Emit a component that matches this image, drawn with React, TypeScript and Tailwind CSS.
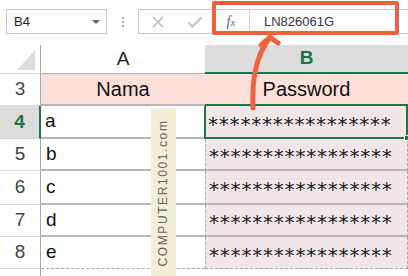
import React from "react";

const GRID = "#b7b5ba";

type Row = { n: number; a: string; h: string; last?: boolean };

const rows: Row[] = [
  { n: 5, a: "b", h: "h-[32px]" },
  { n: 6, a: "c", h: "h-[34px]" },
  { n: 7, a: "d", h: "h-[32px]" },
  { n: 8, a: "e", h: "h-[32px]", last: true },
];

const stars = "*****************";

function Toolbar() {
  return (
    <div className="relative h-[45px] flex items-start pt-[9px]">
      {/* name box */}
      <div className="ml-[6px] w-[101px] h-[25px] border border-[#c6c6c6] flex items-center justify-between pl-[7px] pr-[6px]">
        <span className="text-[13px] text-[#222]">B4</span>
        <span className="w-0 h-0 border-l-[4px] border-r-[4px] border-t-[4px] border-l-transparent border-r-transparent border-t-[#666]" />
      </div>
      <div className="w-[31px] h-[25px] flex flex-col items-center justify-center gap-[2px]">
        <span className="w-[2px] h-[2px] bg-[#b0b0b0]" />
        <span className="w-[2px] h-[2px] bg-[#b0b0b0]" />
        <span className="w-[2px] h-[2px] bg-[#b0b0b0]" />
      </div>
      {/* formula bar */}
      <div className="flex-1 h-[25px] border-y border-l border-[#c6c6c6] flex items-center">
        <div className="w-[74px] flex items-center">
          <svg width="14" height="14" viewBox="0 0 14 14" className="ml-[12px]">
            <path d="M2 2 L12 12 M12 2 L2 12" stroke="#bdbdbd" strokeWidth="1.6" />
          </svg>
          <svg width="16" height="14" viewBox="0 0 16 14" className="ml-[22px]">
            <path d="M1.5 7.5 L5.5 11.5 L14.5 2.5" stroke="#c4c4c4" strokeWidth="2.4" fill="none" />
          </svg>
        </div>
        <div className="w-[37px] h-full border-r border-[#cfcfcf] flex items-center justify-center">
          <span className="text-[14px] italic text-[#666] [font-family:'Liberation_Serif',serif]">
            f<span className="text-[11px]">x</span>
          </span>
        </div>
        <span className="ml-[14px] text-[13px] text-[#333]">LN826061G</span>
      </div>
      {/* highlight */}
      <div className="absolute left-[212px] top-[1px] w-[187px] h-[34px] border-[4px] border-[#f55f3c] rounded-[2px]" />
    </div>
  );
}

function HeaderRow() {
  return (
    <div className="flex h-[29px]">
      <div className="w-[41px] border-r border-[#a6a6a6] border-b border-b-[#d4d4d4] relative">
        <svg width="41" height="29" className="absolute left-0 top-0">
          <polygon points="17,25 35,25 35,5" fill="#dcdcdc" />
        </svg>
      </div>
      <div className="w-[164px] border-b border-[#b0b0b0] flex items-center justify-center text-[19px] text-[#222]">
        A
      </div>
      <div className="flex-1 bg-[#dcdcdc] border-b-2 border-[#217346] flex items-center justify-center text-[19px] font-bold text-[#217346]">
        B
      </div>
    </div>
  );
}

export default function App() {
  return (
    <div className="relative w-[408px] h-[276px] overflow-hidden bg-white [font-family:'Liberation_Sans',Arial,sans-serif]">
      <Toolbar />
      <HeaderRow />

      {/* row 3 */}
      <div className="flex h-[32px]">
        <div className="w-[41px] border-r border-[#a6a6a6] border-b border-b-[#dcdcdc] flex items-center justify-center text-[19px] text-[#444]">
          3
        </div>
        <div className="w-[164px] bg-[#fde0da] border-b-2 border-[#b7b5ba] flex items-center justify-center text-[20px] text-[#111]">
          Nama
        </div>
        <div className="flex-1 bg-[#fde0da] border-b-2 border-[#217346] flex items-center justify-center text-[20px] text-[#111]">
          Password
        </div>
      </div>

      {/* row 4 (selected) */}
      <div className="flex h-[33px]">
        <div className="w-[41px] bg-[#dcdcdc] border-r-2 border-[#217346] border-b border-b-[#d0d0d0] flex items-center justify-center text-[19px] font-bold text-[#217346]">
          4
        </div>
        <div
          className="w-[163px] border-b-2 flex items-center pl-[4px] text-[19px] text-[#111]"
          style={{ borderColor: GRID }}
        >
          a
        </div>
        <div className="relative flex-1 bg-[#f0e6e8] border-x-2 border-b-2 border-[#217346] flex items-center pl-[2px] pt-[4px] text-[20px] tracking-[0.8px] text-[#1a1a1a] [font-family:'DejaVu_Sans',sans-serif]">
          {stars}
          <span className="absolute right-[-4px] bottom-[-4px] w-[6px] h-[6px] bg-[#217346] border border-white" />
        </div>
      </div>

      {rows.map((r) => (
        <div key={r.n} className={`flex ${r.h}`}>
          <div className="w-[41px] border-r border-[#a6a6a6] border-b border-b-[#dcdcdc] flex items-center justify-center text-[19px] text-[#444]">
            {r.n}
          </div>
          <div
            className={
              r.last
                ? "w-[164px] border-b border-dashed border-[#a8a8a8] flex items-center pl-[5px] text-[19px] text-[#111]"
                : "w-[164px] border-b-2 border-[#b7b5ba] flex items-center pl-[5px] text-[19px] text-[#111]"
            }
          >
            {r.a}
          </div>
          <div
            className={
              r.last
                ? "flex-1 bg-[#f0e6e8] border-x border-b border-dashed border-[#a8a8a8] flex items-center pl-[3px] pt-[4px] text-[20px] tracking-[0.8px] text-[#1a1a1a] [font-family:'DejaVu_Sans',sans-serif]"
                : "flex-1 bg-[#f0e6e8] border-x border-dashed border-x-[#a8a8a8] border-b-2 border-b-[#b7b5ba] flex items-center pl-[3px] pt-[4px] text-[20px] tracking-[0.8px] text-[#1a1a1a] [font-family:'DejaVu_Sans',sans-serif]"
            }
            style={r.last ? undefined : { borderBottomStyle: "solid" }}
          >
            {stars}
          </div>
        </div>
      ))}
      <div className="flex h-[10px]">
        <div className="w-[41px] border-r border-[#a6a6a6]" />
      </div>

      {/* watermark strip */}
      <div className="absolute left-[151px] top-[108px] w-[25px] h-[180px] bg-[#f1efd6] flex items-center justify-center">
        <span className="-rotate-90 whitespace-nowrap text-[12px] tracking-[1.6px] text-[#5f5f5f] -translate-y-[5px]">
          COMPUTER1001.com
        </span>
      </div>

      {/* arrow */}
      <svg className="absolute left-0 top-0 pointer-events-none" width="408" height="276">
        <path d="M253 108 Q251 62 269 39" stroke="#f2613f" strokeWidth="5" fill="none" strokeLinecap="round" />
        <path d="M261 45 L270 37 L278 43" stroke="#f2613f" strokeWidth="5" fill="none" strokeLinecap="round" strokeLinejoin="round" />
      </svg>
    </div>
  );
}
